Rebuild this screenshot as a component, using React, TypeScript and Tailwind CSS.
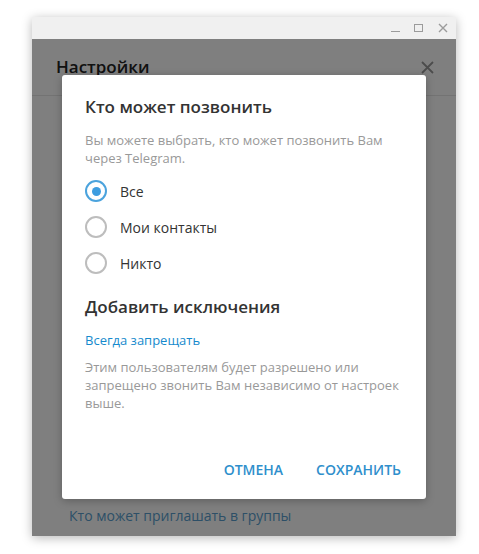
const font = { fontFamily: '"Open Sans", "Noto Sans", sans-serif' };

function Radio({ checked, label }: { checked?: boolean; label: string }) {
  return (
    <div className="flex h-9 items-center">
      <div
        className={
          checked
            ? 'flex h-[22px] w-[22px] items-center justify-center rounded-full border-2 border-[#4ba3dd]'
            : 'flex h-[22px] w-[22px] items-center justify-center rounded-full border-2 border-[#bdbdbd]'
        }
      >
        {checked && <div className="h-[9px] w-[9px] rounded-full bg-[#3d9de0]" />}
      </div>
      <span className="ml-[13px] text-[14px] text-[#333]">{label}</span>
    </div>
  );
}

export default function App() {
  return (
    <div className="h-[554px] w-[479px] bg-white pt-[17px] pl-[32px]" style={font}>
      <div className="relative flex h-[519px] w-[424px] flex-col shadow-[0_2px_10px_rgba(0,0,0,0.28)]">
        {/* title bar */}
        <div className="flex h-[22px] shrink-0 items-center justify-end bg-[#f0f0f0] pr-[8px]">
          <div className="mt-[7px] h-[1.5px] w-[9px] bg-[#9b9b9b]" />
          <div className="ml-[14px] h-[8px] w-[9px] border-[1.5px] border-[#9b9b9b]" />
          <svg className="ml-[15px]" width="10" height="10" viewBox="0 0 10 10">
            <path d="M1 1L9 9M9 1L1 9" stroke="#9b9b9b" strokeWidth="1.4" />
          </svg>
        </div>

        {/* settings page */}
        <div className="relative flex flex-1 flex-col bg-white">
          <div className="flex h-[57px] items-center justify-between border-b border-[#e6e6e6] pl-[24px] pr-[22px]">
            <span className="text-[17px] font-semibold text-[#222]">Настройки</span>
            <svg width="13" height="13" viewBox="0 0 13 13">
              <path d="M1 1L12 12M12 1L1 12" stroke="#999" strokeWidth="1.8" />
            </svg>
          </div>
          <div className="flex-1" />
          <div className="pb-[10px] pl-[37px] text-[14px] text-[#5a9fcf]">Кто может приглашать в группы</div>

          <div className="absolute inset-0 bg-black/50" />

          {/* dialog */}
          <div className="absolute top-[36px] left-[30px] flex h-[424px] w-[364px] flex-col rounded-[3px] bg-white px-[23px] pt-[20px] shadow-[0_2px_8px_rgba(0,0,0,0.25)]">
            <div className="text-[17px] leading-[24px] font-semibold text-[#333]">Кто может позвонить</div>
            <div className="mt-[12px] text-[13px] leading-[18px] text-[#999]">
              Вы можете выбрать, кто может позвонить Вам
              <br />
              через Telegram.
            </div>
            <div className="mt-[6px]">
              <Radio checked label="Все" />
              <Radio label="Мои контакты" />
              <Radio label="Никто" />
            </div>
            <div className="mt-[14px] text-[17px] leading-[24px] font-semibold text-[#333]">Добавить исключения</div>
            <div className="mt-[12px] text-[13px] leading-[18px] text-[#168acd]">Всегда запрещать</div>
            <div className="mt-[9px] text-[13px] leading-[18px] text-[#999]">
              Этим пользователям будет разрешено или
              <br />
              запрещено звонить Вам независимо от настроек
              <br />
              выше.
            </div>
            <div className="mt-auto mb-[12px] flex h-9 items-center justify-end gap-[33px] pr-[2px] text-[14px] font-semibold text-[#2f8fcc]">
              <span>ОТМЕНА</span>
              <span>СОХРАНИТЬ</span>
            </div>
          </div>
        </div>
      </div>
    </div>
  );
}
